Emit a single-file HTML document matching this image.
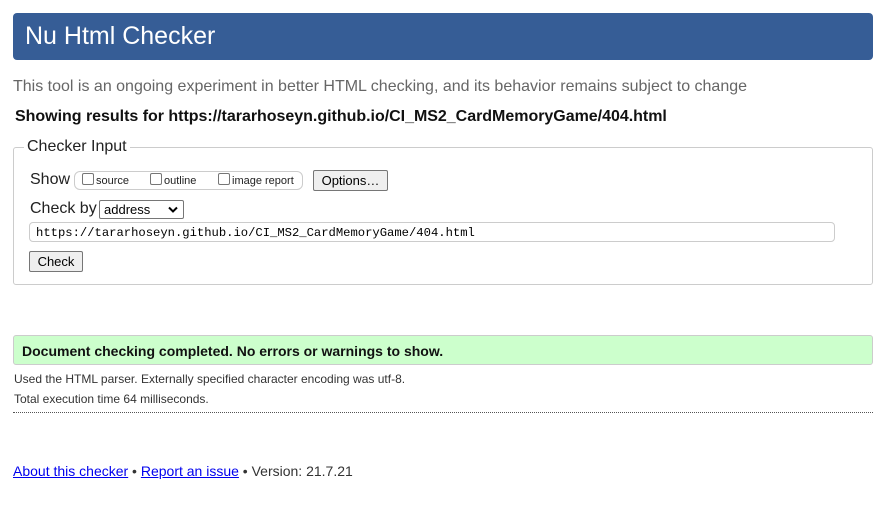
<!DOCTYPE html>
<html><head><style>
*{margin:0;padding:0;box-sizing:border-box}
body{width:883px;height:525px;background:#fff;font-family:"Liberation Sans",Arial,sans-serif;position:relative;overflow:hidden;color:#222}
.a{position:absolute;white-space:nowrap}
.hdr{left:13px;top:13px;width:860px;height:47px;background:#365d96;border-radius:4px;color:#fff;font-size:25px;padding:9px 0 0 12px}
.btn{position:absolute;border:1px solid #767676;background:#efefef;border-radius:2px;font-size:13px;text-align:center;color:#000}
.cb{display:inline-block;width:12px;height:12px;border:1px solid #767676;border-radius:2px;vertical-align:-1px;margin-right:2px;background:#fff}
a{color:#00e;text-decoration:underline}
</style></head><body>
<div class="a hdr">Nu Html Checker</div>
<div class="a" style="left:13px;top:78px;font-size:16px;color:#666">This tool is an ongoing experiment in better HTML checking, and its behavior remains subject to change</div>
<div class="a" style="left:15px;top:108px;font-size:16px;font-weight:bold;color:#111;letter-spacing:-0.02px">Showing results for https://tararhoseyn.github.io/CI_MS2_CardMemoryGame/404.html</div>
<div class="a" style="left:13px;top:147px;width:860px;height:138px;border:1px solid #ccc;border-radius:3px"></div>
<div class="a" style="left:24px;top:138px;font-size:16px;background:#fff;padding:0 3px;color:#222">Checker Input</div>
<div class="a" style="left:30px;top:171px;font-size:16px">Show</div>
<div class="a" style="left:74px;top:171px;width:229px;height:19px;border:1px solid #ccc;border-radius:6px"></div>
<div class="a" style="left:82px;top:173px;font-size:11px"><span class="cb"></span>source</div>
<div class="a" style="left:150px;top:173px;font-size:11px"><span class="cb"></span>outline</div>
<div class="a" style="left:218px;top:173px;font-size:11px"><span class="cb"></span>image report</div>
<div class="btn" style="left:313px;top:170px;width:75px;height:21px;line-height:19px">Options…</div>
<div class="a" style="left:30px;top:200px;font-size:16px">Check by</div>
<div class="a" style="left:99px;top:200px;width:85px;height:19px;border:1px solid #767676;border-radius:2px;font-size:13px;padding:1px 0 0 4px;color:#000">address<svg style="position:absolute;right:5px;top:5px" width="10" height="7" viewBox="0 0 10 7"><path d="M1 1.5L5 5.5L9 1.5" fill="none" stroke="#000" stroke-width="2"/></svg></div>
<div class="a" style="left:29px;top:222px;width:806px;height:20px;border:1px solid #ccc;border-radius:4px;font-family:'Liberation Mono',monospace;font-size:12.2px;padding:3px 0 0 6px;color:#000">https://tararhoseyn.github.io/CI_MS2_CardMemoryGame/404.html</div>
<div class="btn" style="left:29px;top:251px;width:54px;height:21px;line-height:19px;font-size:13px">Check</div>
<div class="a" style="left:13px;top:335px;width:860px;height:30px;background:#ccffcc;border:1px solid #ccc;border-radius:3px;font-size:14px;font-weight:bold;padding:7px 0 0 8px;color:#111">Document checking completed. No errors or warnings to show.</div>
<div class="a" style="left:14px;top:372px;font-size:12px;color:#333">Used the HTML parser. Externally specified character encoding was utf-8.</div>
<div class="a" style="left:14px;top:392px;font-size:12px;color:#333">Total execution time 64 milliseconds.</div>
<div class="a" style="left:13px;top:412px;width:860px;border-top:1px dotted #555"></div>
<div class="a" style="left:13px;top:463px;font-size:14px;color:#333"><a>About this checker</a> • <a>Report an issue</a> • Version: 21.7.21</div>
</body></html>
